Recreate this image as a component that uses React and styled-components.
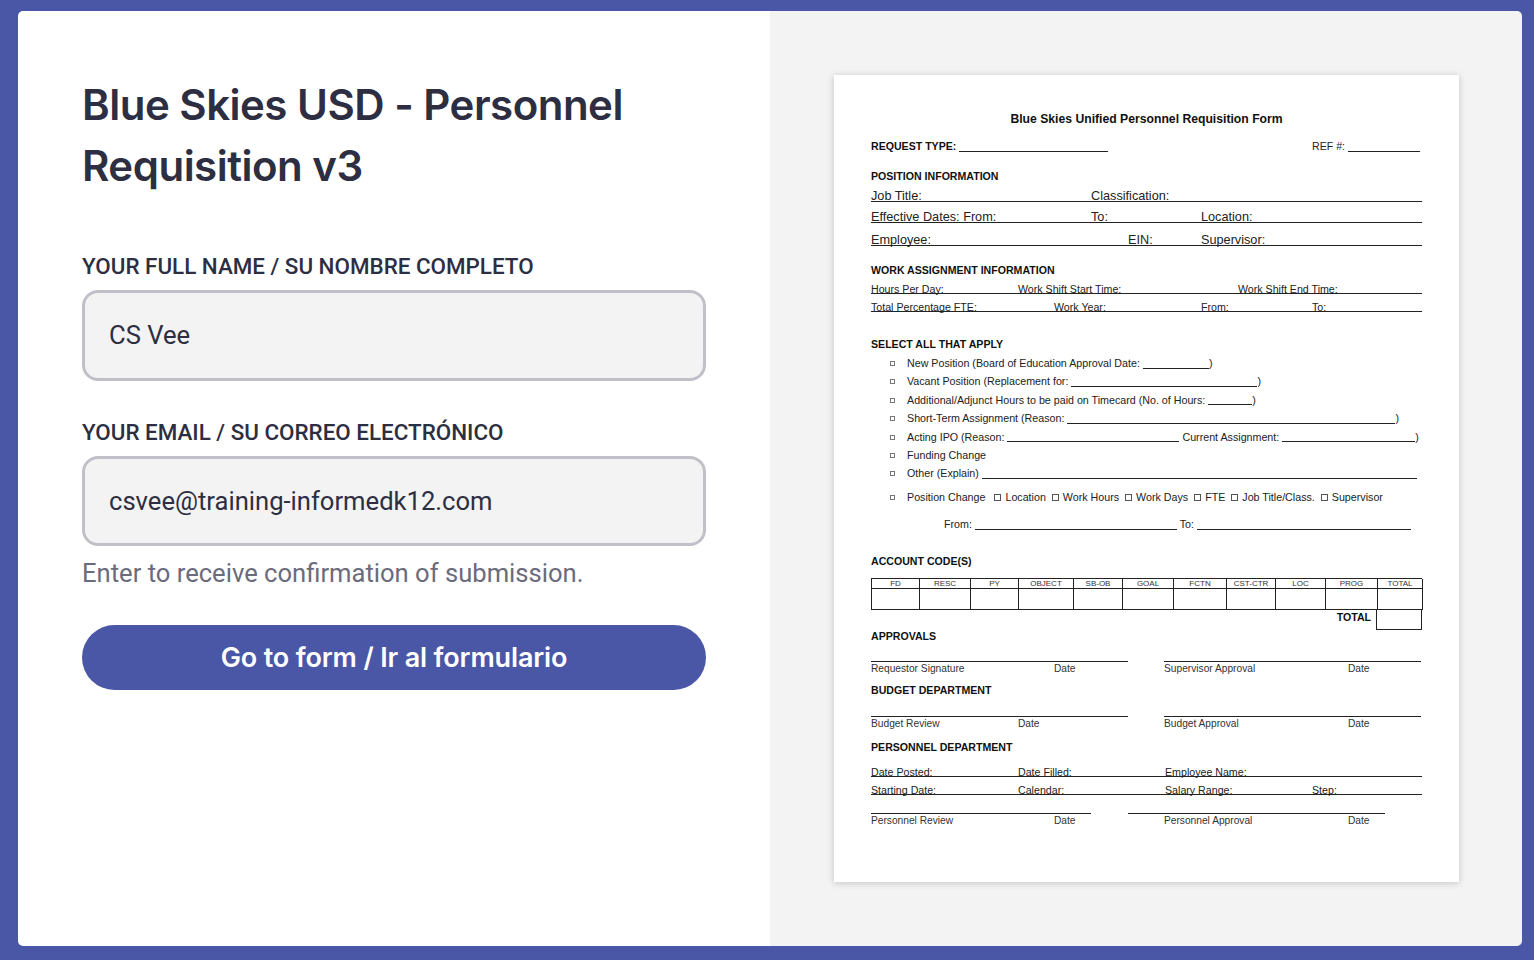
import React from 'react';
import styled, { createGlobalStyle } from 'styled-components';

const GlobalStyle = createGlobalStyle`
  html, body {
    margin: 0;
    padding: 0;
    background: #4a56a6;
  }
  * { box-sizing: border-box; }
`;

const Frame = styled.div`
  width: 1534px;
  height: 960px;
  padding: 11px 12px 14px 18px;
  background: #4a56a6;
  overflow: hidden;
`;

const Card = styled.main`
  display: grid;
  grid-template-columns: 752px 1fr;
  height: 935px;
  border-radius: 5px;
  overflow: hidden;
`;

const FormPanel = styled.section`
  background: #fff;
  padding: 63px 64px 0;
`;

const Title = styled.h1`
  margin: 0 0 55px;
  font-family: Inter, sans-serif;
  font-size: 42px;
  font-weight: 600;
  line-height: 61px;
  letter-spacing: -0.5px;
  color: #2d2e42;
`;

const Label = styled.label`
  display: block;
  margin-bottom: 9px;
  font-family: Roboto, sans-serif;
  font-size: 22.4px;
  font-weight: 500;
  line-height: 30px;
  color: #2d2e42;
`;

const Input = styled.input`
  display: block;
  width: 100%;
  height: ${(p) => p.$height}px;
  margin-bottom: ${(p) => p.$after}px;
  padding: 0 24px 1px;
  border: 3px solid #c0c0c8;
  border-radius: 16px;
  background: #f3f3f3;
  font-family: Roboto, sans-serif;
  font-size: 25.6px;
  color: #2d2e42;
  outline: none;
`;

const Hint = styled.p`
  margin: 10px 0 35px;
  font-family: Roboto, sans-serif;
  font-size: 25.6px;
  line-height: 34px;
  color: #6b6b7b;
`;

const SubmitButton = styled.button`
  display: block;
  width: 100%;
  height: 65px;
  border: none;
  border-radius: 33px;
  background: #4a56a6;
  color: #fff;
  font-family: Inter, sans-serif;
  font-size: 27px;
  font-weight: 600;
  letter-spacing: -0.15px;
  cursor: pointer;
`;

const PreviewPanel = styled.section`
  background: #f3f3f3;
  padding: 64px 64px 0;
`;

const Sheet = styled.article`
  height: 807px;
  padding: 38px 37px 0;
  background: #fff;
  box-shadow: 0 1px 7px rgba(0, 0, 0, 0.2);
  font-family: 'Liberation Sans', Arial, sans-serif;
  color: #222;
`;

const SheetTitle = styled.h2`
  margin: 0;
  font-size: 12.2px;
  font-weight: 700;
  line-height: 13px;
  text-align: center;
  color: #111;
`;

const Heading = styled.h3`
  margin: ${(p) => p.$top}px 0 0;
  font-size: 10.6px;
  font-weight: 700;
  line-height: 12px;
  color: #111;
`;

const RequestRow = styled.div`
  display: flex;
  justify-content: space-between;
  height: 12px;
  margin-top: 14px;
  padding-right: 2px;
  font-size: 10.6px;
  line-height: 12px;
`;

const Bold = styled.span`
  font-weight: 700;
  color: #111;
`;

const Blank = styled.span`
  display: inline-block;
  width: ${(p) => p.$w}px;
  height: 11px;
  margin: 0 ${(p) => p.$after || 0}px 0 3px;
  border-bottom: 1px solid #222;
  vertical-align: -2px;
`;

const FieldLine = styled.div`
  display: flex;
  height: ${(p) => p.$h}px;
  margin-top: ${(p) => p.$top}px;
  border-bottom: 1px solid #222;
  font-size: ${(p) => p.$size}px;
  line-height: ${(p) => p.$h + 2}px;
`;

const Cell = styled.span`
  flex: 0 0 ${(p) => p.$w}px;
  white-space: nowrap;
`;

const ItemList = styled.div`
  display: flex;
  flex-direction: column;
  margin-top: 7px;
  padding-left: 19px;
  font-size: 10.7px;
  line-height: 12px;
`;

const Item = styled.div`
  display: flex;
  align-items: center;
  height: 12px;
  margin-top: ${(p) => p.$top ?? 6.4}px;
  white-space: nowrap;
  &:first-child { margin-top: 0; }
`;

const ItemBox = styled.span`
  flex: none;
  width: 5px;
  height: 5px;
  margin: 1px 12px 0 0;
  border: 1px solid #777;
`;

const ChangeOption = styled.span`
  display: inline-flex;
  align-items: center;
  margin-left: ${(p) => p.$left}px;
`;

const InlineBox = styled.span`
  width: 7px;
  height: 7px;
  margin-right: 4px;
  border: 1px solid #555;
`;

const FromRow = styled.div`
  margin: 15px 0 0 73px;
  height: 12px;
  font-size: 10.7px;
  line-height: 12px;
  white-space: nowrap;
`;

const CodeTable = styled.div`
  display: grid;
  grid-template-columns: 48px 51px 48px 55px 49px 51px 53px 49px 50px 52px 45px;
  width: 551px;
  margin-top: 11px;
  border-top: 1px solid #222;
  border-left: 1px solid #222;
`;

const CodeHead = styled.div`
  height: 10px;
  border-right: 1px solid #222;
  border-bottom: 1px solid #222;
  font-size: 8px;
  line-height: 9px;
  text-align: center;
  color: #333;
`;

const CodeCell = styled.div`
  height: 21px;
  border-right: 1px solid #222;
  border-bottom: 1px solid #222;
`;

const TotalRow = styled.div`
  display: flex;
  justify-content: flex-end;
  width: 551px;
`;

const TotalLabel = styled.span`
  margin: 1px 5px 0 0;
  font-size: 10.6px;
  font-weight: 700;
  line-height: 12px;
  color: #111;
`;

const TotalBox = styled.div`
  width: 46px;
  height: 20px;
  border: 1px solid #222;
  border-top: none;
`;

const SignRow = styled.div`
  display: flex;
  justify-content: space-between;
  width: ${(p) => p.$w}px;
  margin-top: ${(p) => p.$top}px;
`;

const SignBlock = styled.div`
  display: flex;
  width: ${(p) => p.$w}px;
  height: 14px;
  padding-left: ${(p) => p.$indent || 0}px;
  border-top: 1px solid #222;
  font-size: 10.2px;
  line-height: 14px;
  color: #333;
  white-space: nowrap;
`;

const codes = ['FD', 'RESC', 'PY', 'OBJECT', 'SB-OB', 'GOAL', 'FCTN', 'CST-CTR', 'LOC', 'PROG', 'TOTAL'];

const changeOptions = [
  ['Location', 9],
  ['Work Hours', 6],
  ['Work Days', 6],
  ['FTE', 6],
  ['Job Title/Class.', 6],
  ['Supervisor', 6],
];

function Signature({ width, indent, label, dateAt }) {
  return (
    <SignBlock $w={width} $indent={indent}>
      <Cell $w={dateAt}>{label}</Cell>
      <span>Date</span>
    </SignBlock>
  );
}

export default function App() {
  return (
    <>
      <GlobalStyle />
      <Frame>
        <Card>
          <FormPanel>
            <Title>Blue Skies USD - Personnel Requisition v3</Title>
            <Label htmlFor="name">YOUR FULL NAME / SU NOMBRE COMPLETO</Label>
            <Input id="name" defaultValue="CS Vee" $height={91} $after={36} />
            <Label htmlFor="email">YOUR EMAIL / SU CORREO ELECTRÓNICO</Label>
            <Input id="email" defaultValue="csvee@training-informedk12.com" $height={90} $after={0} />
            <Hint>Enter to receive confirmation of submission.</Hint>
            <SubmitButton>Go to form / Ir al formulario</SubmitButton>
          </FormPanel>

          <PreviewPanel>
            <Sheet>
              <SheetTitle>Blue Skies Unified Personnel Requisition Form</SheetTitle>

              <RequestRow>
                <span><Bold>REQUEST TYPE:</Bold><Blank $w={149} /></span>
                <span>REF #:<Blank $w={72} /></span>
              </RequestRow>

              <Heading $top={18}>POSITION INFORMATION</Heading>
              <FieldLine $top={7} $h={13} $size={12.7}><Cell $w={220}>Job Title:</Cell><Cell>Classification:</Cell></FieldLine>
              <FieldLine $top={8} $h={13} $size={12.7}><Cell $w={220}>Effective Dates: From:</Cell><Cell $w={110}>To:</Cell><Cell>Location:</Cell></FieldLine>
              <FieldLine $top={10} $h={13} $size={12.7}><Cell $w={257}>Employee:</Cell><Cell $w={73}>EIN:</Cell><Cell>Supervisor:</Cell></FieldLine>

              <Heading $top={18}>WORK ASSIGNMENT INFORMATION</Heading>
              <FieldLine $top={6} $h={12} $size={10.65}><Cell $w={147}>Hours Per Day:</Cell><Cell $w={220}>Work Shift Start Time:</Cell><Cell>Work Shift End Time:</Cell></FieldLine>
              <FieldLine $top={6} $h={12} $size={10.65}><Cell $w={183}>Total Percentage FTE:</Cell><Cell $w={147}>Work Year:</Cell><Cell $w={111}>From:</Cell><Cell>To:</Cell></FieldLine>

              <Heading $top={26}>SELECT ALL THAT APPLY</Heading>
              <ItemList>
                <Item><ItemBox />New Position (Board of Education Approval Date:<Blank $w={66} />)</Item>
                <Item><ItemBox />Vacant Position (Replacement for:<Blank $w={186} />)</Item>
                <Item><ItemBox />Additional/Adjunct Hours to be paid on Timecard (No. of Hours:<Blank $w={44} />)</Item>
                <Item><ItemBox />Short-Term Assignment (Reason:<Blank $w={328} />)</Item>
                <Item><ItemBox />Acting IPO (Reason:<Blank $w={172} $after={3} />Current Assignment:<Blank $w={133} />)</Item>
                <Item><ItemBox />Funding Change</Item>
                <Item><ItemBox />Other (Explain)<Blank $w={435} /></Item>
                <Item $top={12}>
                  <ItemBox />Position Change
                  {changeOptions.map(([name, left]) => (
                    <ChangeOption key={name} $left={left}><InlineBox />{name}</ChangeOption>
                  ))}
                </Item>
              </ItemList>
              <FromRow>From:<Blank $w={202} /> To:<Blank $w={214} /></FromRow>

              <Heading $top={25}>ACCOUNT CODE(S)</Heading>
              <CodeTable>
                {codes.map((code) => <CodeHead key={code}>{code}</CodeHead>)}
                {codes.map((code) => <CodeCell key={code} />)}
              </CodeTable>
              <TotalRow><TotalLabel>TOTAL</TotalLabel><TotalBox /></TotalRow>

              <Heading $top={0}>APPROVALS</Heading>
              <SignRow $w={550} $top={19}>
                <Signature width={257} label="Requestor Signature" dateAt={183} />
                <Signature width={257} label="Supervisor Approval" dateAt={184} />
              </SignRow>

              <Heading $top={9}>BUDGET DEPARTMENT</Heading>
              <SignRow $w={550} $top={20}>
                <Signature width={257} label="Budget Review" dateAt={147} />
                <Signature width={257} label="Budget Approval" dateAt={184} />
              </SignRow>

              <Heading $top={11}>PERSONNEL DEPARTMENT</Heading>
              <FieldLine $top={12} $h={12} $size={10.65}><Cell $w={147}>Date Posted:</Cell><Cell $w={147}>Date Filled:</Cell><Cell>Employee Name:</Cell></FieldLine>
              <FieldLine $top={6} $h={12} $size={10.65}><Cell $w={147}>Starting Date:</Cell><Cell $w={147}>Calendar:</Cell><Cell $w={147}>Salary Range:</Cell><Cell>Step:</Cell></FieldLine>
              <SignRow $w={514} $top={18}>
                <Signature width={220} label="Personnel Review" dateAt={183} />
                <Signature width={257} indent={36} label="Personnel Approval" dateAt={184} />
              </SignRow>
            </Sheet>
          </PreviewPanel>
        </Card>
      </Frame>
    </>
  );
}
